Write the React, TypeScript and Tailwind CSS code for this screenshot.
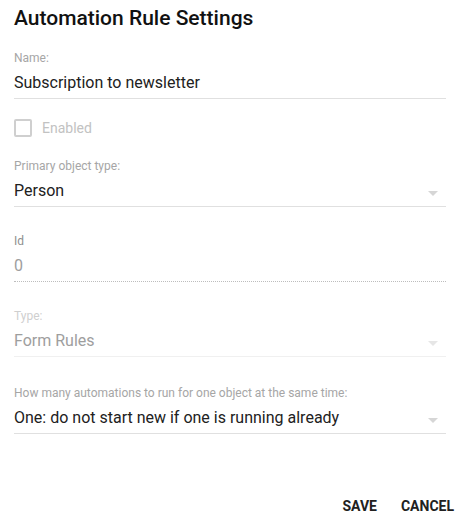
import React from 'react';

const Arrow: React.FC<{ color?: string }> = ({ color = 'border-t-[#d6d6d6]' }) => (
  <span className={`ml-auto mr-[8px] mt-[6px] h-0 w-0 border-x-[5px] border-t-[5px] border-x-transparent ${color}`} />
);

interface FieldProps {
  label: string;
  value: string;
  labelClass?: string;
  valueClass?: string;
  lineClass?: string;
  arrow?: string;
  top: string;
}

const Field: React.FC<FieldProps> = ({ label, value, labelClass = 'text-[#a6a6a6]', valueClass = 'text-[#212121]', lineClass = 'border-b border-[#e0e0e0]', arrow, top }) => (
  <div className={top}>
    <div className={`h-4 text-[12px] leading-4 ${labelClass}`}>{label}</div>
    <div className={`flex h-[33px] items-center pt-[1px] ${lineClass}`}>
      <span className={`text-[16px] leading-6 ${valueClass}`}>{value}</span>
      {arrow && <Arrow color={arrow} />}
    </div>
  </div>
);

export default function App() {
  return (
    <div className="h-[515px] w-[464px] bg-white font-['Roboto',sans-serif]">
      <div className="pl-[14px] pr-[18px]">
        <h2 className="pt-[6px] text-[21px] font-medium leading-6 text-[#111]">Automation Rule Settings</h2>

        <Field top="mt-[20px]" label="Name:" value="Subscription to newsletter" />

        <label className="mt-[20px] flex h-[18px] items-center gap-[10px]">
          <span className="h-[18px] w-[18px] rounded-[2px] border-2 border-[#cfcfcf]" />
          <span className="text-[14px] text-[#c2c2c2]">Enabled</span>
        </label>

        <Field top="mt-[21px]" label="Primary object type:" value="Person" arrow="border-t-[#d6d6d6]" />

        <Field
          top="mt-[26px]"
          label="Id"
          value="0"
          labelClass="text-[#8f8f8f]"
          valueClass="text-[#9e9e9e]"
          lineClass="border-b border-dotted border-[#bdbdbd]"
        />

        <Field
          top="mt-[26px]"
          label="Type:"
          value="Form Rules"
          labelClass="text-[#cfcfcf]"
          valueClass="text-[#9e9e9e]"
          lineClass="border-b border-[#f0f0f0]"
          arrow="border-t-[#e6e6e6]"
        />

        <Field
          top="mt-[28px]"
          label="How many automations to run for one object at the same time:"
          value="One: do not start new if one is running already"
          arrow="border-t-[#d6d6d6]"
        />
      </div>

      <div className="mt-[54px] flex justify-end gap-[8px] pr-[2px]">
        <button className="h-9 px-2 text-[14px] font-bold uppercase text-[#212121]">Save</button>
        <button className="h-9 px-2 text-[14px] font-bold uppercase text-[#212121]">Cancel</button>
      </div>
    </div>
  );
}
